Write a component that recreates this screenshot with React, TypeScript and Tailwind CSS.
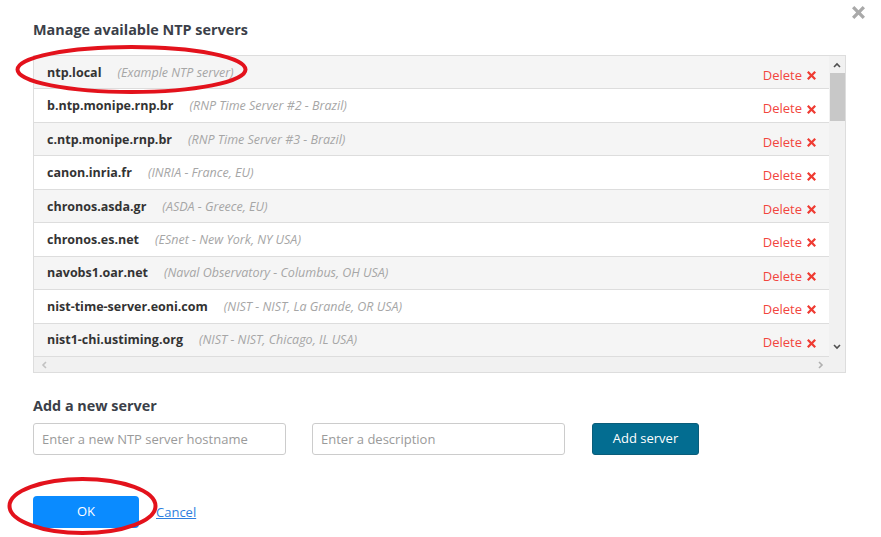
import React from "react";

const rows: [string, string][] = [
  ["ntp.local", "(Example NTP server)"],
  ["b.ntp.monipe.rnp.br", "(RNP Time Server #2 - Brazil)"],
  ["c.ntp.monipe.rnp.br", "(RNP Time Server #3 - Brazil)"],
  ["canon.inria.fr", "(INRIA - France, EU)"],
  ["chronos.asda.gr", "(ASDA - Greece, EU)"],
  ["chronos.es.net", "(ESnet - New York, NY USA)"],
  ["navobs1.oar.net", "(Naval Observatory - Columbus, OH USA)"],
  ["nist-time-server.eoni.com", "(NIST - NIST, La Grande, OR USA)"],
  ["nist1-chi.ustiming.org", "(NIST - NIST, Chicago, IL USA)"],
];

function HeavyX({ size, color }: { size: number; color: string }) {
  return (
    <svg width={size} height={size} viewBox="0 0 10 10" className="shrink-0">
      <path
        d="M1.8 0 L5 3.2 L8.2 0 L10 1.8 L6.8 5 L10 8.2 L8.2 10 L5 6.8 L1.8 10 L0 8.2 L3.2 5 L0 1.8 Z"
        fill={color}
      />
    </svg>
  );
}

export default function App() {
  return (
    <div className="relative w-[881px] h-[537px] bg-white overflow-hidden font-['Open_Sans',sans-serif]">
      <div className="absolute top-[6px] left-[852px]">
        <HeavyX size={13} color="#a9a9a9" />
      </div>

      <div className="pl-[33px] pt-[21px] w-[846px]">
        <h2 className="text-[14.4px] leading-[18px] font-bold text-[#3b3f49]">
          Manage available NTP servers
        </h2>

        <div className="mt-[16px] border border-[#dddddd] h-[318px] flex flex-col">
          <div className="flex h-[301px]">
            <div className="flex-1 flex flex-col overflow-hidden">
              {rows.map(([host, desc], i) => (
                <div
                  key={host}
                  className={`h-[33.45px] shrink-0 flex items-center pl-[13px] pr-[13px] pt-[2px] border-b border-[#dddddd] ${
                    i % 2 === 0 ? "bg-[#f5f5f5]" : "bg-white"
                  }`}
                >
                  <span className="text-[12.5px] font-bold text-[#333333]">{host}</span>
                  <span className="ml-[16px] text-[12.5px] italic text-[#a6a6a6]">{desc}</span>
                  <span className="ml-auto flex items-center gap-[5px] text-[13px] text-[#f2453d] pt-[5px]">
                    Delete
                    <HeavyX size={9} color="#ef3b32" />
                  </span>
                </div>
              ))}
            </div>
            <div className="w-[16px] bg-[#f1f1f1] flex flex-col items-center">
              <div className="h-[17px] flex items-center justify-center">
                <svg width="8" height="6" viewBox="0 0 8 6">
                  <path d="M1 5 L4 2 L7 5" stroke="#505050" strokeWidth="1.6" fill="none" />
                </svg>
              </div>
              <div className="w-[15px] h-[48px] bg-[#c8c8c8]" />
              <div className="flex-1" />
              <div className="h-[17px] flex items-center justify-center mb-[2px]">
                <svg width="8" height="6" viewBox="0 0 8 6">
                  <path d="M1 1 L4 4 L7 1" stroke="#505050" strokeWidth="1.6" fill="none" />
                </svg>
              </div>
            </div>
          </div>
          <div className="flex-1 bg-[#f1f1f1] flex items-center justify-between pl-[7px] pr-[21px]">
            <svg width="6" height="8" viewBox="0 0 6 8">
              <path d="M5 1 L2 4 L5 7" stroke="#c2c2c2" strokeWidth="1.6" fill="none" />
            </svg>
            <svg width="6" height="8" viewBox="0 0 6 8">
              <path d="M1 1 L4 4 L1 7" stroke="#b0b0b0" strokeWidth="1.6" fill="none" />
            </svg>
          </div>
        </div>

        <h3 className="mt-[24px] text-[14.4px] leading-[18px] font-bold text-[#3b3f49]">
          Add a new server
        </h3>

        <div className="mt-[8px] flex items-center">
          <input
            className="w-[253px] h-[32px] border border-[#cccccc] rounded-[3px] px-[8px] text-[13px] text-[#333] placeholder:text-[#9a9a9a] outline-none"
            placeholder="Enter a new NTP server hostname"
          />
          <input
            className="ml-[26px] w-[253px] h-[32px] border border-[#cccccc] rounded-[3px] px-[8px] text-[13px] text-[#333] placeholder:text-[#9a9a9a] outline-none"
            placeholder="Enter a description"
          />
          <button className="ml-[27px] w-[107px] h-[32px] rounded-[3px] bg-[#036d91] border border-[#0a5d7a] text-white text-[13px]">
            Add server
          </button>
        </div>

        <div className="mt-[41px] flex items-center">
          <button className="w-[106px] h-[32px] rounded-[4px] bg-[#0a8bff] text-white text-[13px]">
            OK
          </button>
          <a href="#" className="ml-[17px] mt-[1px] text-[13px] text-[#2f7fe0] underline">
            Cancel
          </a>
        </div>
      </div>

      <svg className="absolute inset-0 pointer-events-none" width="881" height="537">
        <ellipse cx="131.5" cy="69.5" rx="114" ry="22.5" fill="none" stroke="#e3121c" strokeWidth="4" />
        <ellipse cx="82.5" cy="506" rx="73" ry="27" fill="none" stroke="#e3121c" strokeWidth="4" />
      </svg>
    </div>
  );
}
